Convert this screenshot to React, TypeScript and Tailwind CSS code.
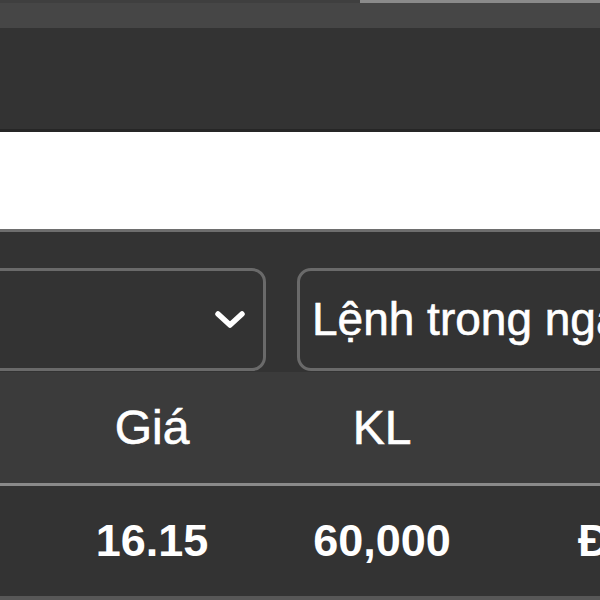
import { useState } from 'react';

const rows = [{ price: '16.15', volume: '60,000', side: 'Đã khớp' }];

export default function App() {
  const [filter] = useState('Lệnh trong ngày');

  return (
    <div className="w-[600px] h-[600px] overflow-hidden bg-[#333333] font-['Liberation_Sans',Arial,sans-serif] text-white">
      {/* Top bar */}
      <div className="h-[28px] bg-[#464646] flex flex-col">
        <div className="h-[3px] flex">
          <div className="w-[360px] bg-[#3f3f3f]" />
          <div className="flex-1 bg-[#8a8a8a]" />
        </div>
      </div>

      {/* Toolbar area */}
      <div className="h-[104px] bg-[#333333] border-b-[3px] border-[#262626]" />

      {/* White input strip */}
      <div className="h-[100px] bg-white border-b-[3px] border-[#6e6e6e]" />

      {/* Filters */}
      <div className="flex gap-[31px] pt-[36px] pb-[1px] -ml-[24px]">
        <button className="w-[290px] h-[103px] shrink-0 rounded-[14px] border-[3px] border-[#6a6a6a] bg-[#333333] flex items-center justify-end pr-[18px]">
          <svg width="30" height="20" viewBox="0 0 30 20" fill="none">
            <polyline points="3,4 15,15 27,4" stroke="white" strokeWidth="5.5" strokeLinecap="round" strokeLinejoin="round" />
          </svg>
        </button>
        <button className="w-[340px] h-[103px] shrink-0 rounded-[14px] border-[3px] border-[#6a6a6a] bg-[#333333] flex items-center pl-[12px] text-[46px] whitespace-nowrap overflow-hidden [-webkit-text-stroke:0.6px_white]">
          {filter}
        </button>
      </div>

      {/* Table */}
      <div className="bg-[#3b3b3b] h-[114px] border-b-[3px] border-[#8a8a8a] grid grid-cols-[37px_230px_230px_230px] items-center text-[48px] [-webkit-text-stroke:0.6px_white]">
        <div />
        <div className="text-center">Giá</div>
        <div className="text-center">KL</div>
        <div />
      </div>
      {rows.map((r) => (
        <div key={r.price} className="bg-[#333333] h-[114px] border-b-[4px] border-[#575757] grid grid-cols-[37px_230px_230px_230px] items-center text-[45px] font-bold">
          <div />
          <div className="text-center">{r.price}</div>
          <div className="text-center">{r.volume}</div>
          <div className="pl-[81px] whitespace-nowrap">{r.side}</div>
        </div>
      ))}
    </div>
  );
}
